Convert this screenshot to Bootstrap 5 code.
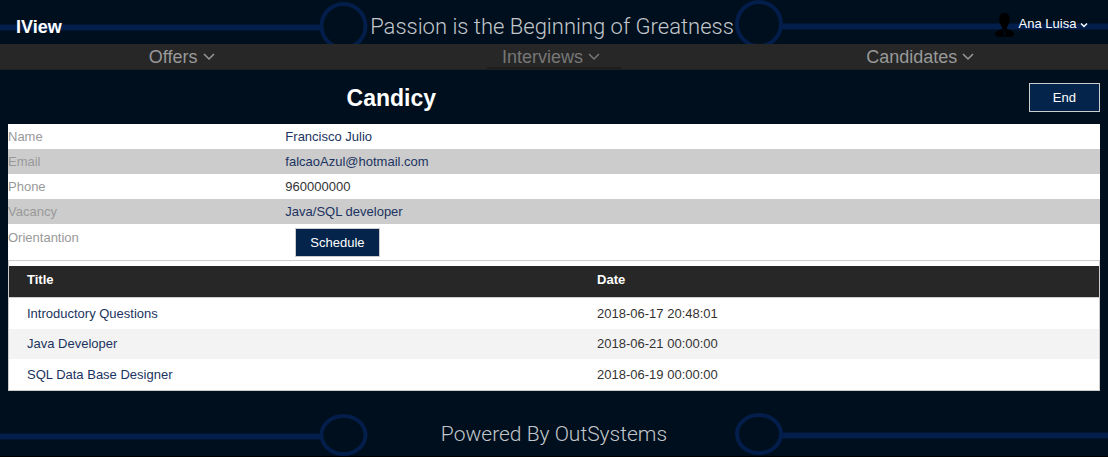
<!DOCTYPE html>
<html lang="en">
<head>
<meta charset="utf-8">
<meta name="viewport" content="width=device-width, initial-scale=1">
<title>IView</title>
<link rel="stylesheet" href="https://cdn.jsdelivr.net/npm/bootstrap@5.3.0/dist/css/bootstrap.min.css">
<style>
body { background: #000f1e; color: #333; font-family: "Liberation Sans", Arial, sans-serif; font-size: 13px; line-height: 20px; }
a { text-decoration: none; }
.banner { position: relative; overflow: hidden; }
.circuit { position: absolute; inset: 0; width: 100%; height: 100%; }
.circuit line, .circuit ellipse { stroke: #031e4a; fill: none; }
.circuit line { stroke-width: 6px; }
.circuit ellipse { stroke-width: 4px; fill: #000f1e; }
.banner-row { position: relative; min-height: 44px; padding: 0 16px; }
.slogan { font-family: Roboto, sans-serif; font-weight: 300; font-size: 22px; line-height: 28px; color: #c3c7cb; padding-top: 13px; white-space: nowrap; }
.brand { font-size: 18px; line-height: 24px; font-weight: bold; color: #fff; padding-top: 15px; }
.user { color: #fff; padding: 12px 4px 0 0; line-height: 24px; }
.user a { color: #fff; }
.menu-bar { background: #272727; border-bottom: 1px solid #1e2226; }
.menu-link { color: #999; font-size: 18px; line-height: 27px; padding: 0 21px 0 15px; height: 25px; }
.menu-link.current { color: #777; border-bottom: 2px solid #1e1e1e; }
.page-body { padding: 13px 8px 0; }
.heading { font-size: 23px; line-height: 30px; font-weight: bold; color: #fff; padding-left: 31%; }
.action { --bs-btn-bg: #04244b; --bs-btn-hover-bg: #0a3568; --bs-btn-color: #fff; --bs-btn-hover-color: #fff; --bs-btn-border-color: #ccc; --bs-btn-border-radius: 0; --bs-btn-padding-y: 3px; --bs-btn-padding-x: 14px; --bs-btn-font-size: 13px; --bs-btn-line-height: 21px; }
.action-wide { --bs-btn-padding-x: 23px; }
.details { background: #fff; margin: 11px 0 0; }
.details th { width: 25.4%; font-weight: normal; color: #999; vertical-align: top; }
.details th, .details td { padding: 3px 0 2px; }
.details tr:nth-child(even) { background: #ccc; }
.details a, .sessions a { color: #1b3360; }
.details tr.plan td { padding: 4px 10px 3px; }
.details tr.plan th { padding-top: 4px; }
.sessions-box { background: #fff; border: 1px solid #ccc; padding-top: 5px; }
.sessions th, .sessions td { padding: 5px 18px; }
.sessions thead { background: #272727; color: #fff; border-bottom: 1px solid #ccc; }
.sessions th { width: 52.3%; padding: 4px 18px 7px; }
.sessions tbody tr:nth-child(even) { background: #f3f3f3; }
.sessions tbody tr:nth-child(odd) td { padding-top: 6px; }
.foot { margin-top: 21px; border-bottom: 1px solid #000; }
.foot-text { position: relative; font-family: Roboto, sans-serif; font-weight: 300; font-size: 21px; line-height: 28px; color: #c3c7cb; padding: 8px 0; }
</style>
</head>
<body>
<header class="banner">
  <svg class="circuit" aria-hidden="true">
    <line x1="0" y1="27.5" x2="31%" y2="27.5"/><ellipse cx="31%" cy="26" rx="22" ry="22"/>
    <line x1="68.5%" y1="26.5" x2="100%" y2="26.5"/><ellipse cx="68.5%" cy="24" rx="22" ry="22"/>
  </svg>
  <div class="banner-row d-flex">
    <div class="col"><a class="brand d-inline-block" href="#">IView</a></div>
    <div class="slogan">Passion is the Beginning of Greatness</div>
    <div class="col user d-flex justify-content-end align-items-start">
      <svg width="21" height="26" viewBox="0 0 21 26" aria-hidden="true"><path d="M10.500 1C7 1 5 3.500 5.200 7.500C5.400 11 6.800 13.500 8 15v2L3 19Q.8 20 .8 22.500Q1 24.500 5 24.700H16Q20 24.500 20.200 22.500Q20.200 20 18 19l-5-2v-2C14.200 13.500 15.600 11 15.800 7.500C16 3.500 14 1 10.500 1Z"/><path d="M8.500 17.500l2 2-1 4M12.500 17.500l-2 2 1 4" fill="none" stroke="#020e22"/></svg>
      <a href="#" class="ms-1">Ana Luisa <svg width="8" height="6" viewBox="0 0 8 6" aria-hidden="true"><path d="M1 1.500l3 3 3-3" fill="none" stroke="#fff" stroke-width="1.500"/></svg></a>
    </div>
  </div>
</header>
<nav class="menu-bar row g-0 text-center">
  <div class="col-4 d-flex justify-content-center"><a class="menu-link" href="#">Offers <svg width="12" height="12" viewBox="0 0 12 12" aria-hidden="true"><path d="M1 2l5 5 5-5" fill="none" stroke="currentColor" stroke-width="1.500"/></svg></a></div>
  <div class="col-4 d-flex justify-content-center"><a class="menu-link current" href="#" aria-current="page">Interviews <svg width="12" height="12" viewBox="0 0 12 12" aria-hidden="true"><path d="M1 2l5 5 5-5" fill="none" stroke="currentColor" stroke-width="1.500"/></svg></a></div>
  <div class="col-4 d-flex justify-content-center"><a class="menu-link" href="#">Candidates <svg width="12" height="12" viewBox="0 0 12 12" aria-hidden="true"><path d="M1 2l5 5 5-5" fill="none" stroke="currentColor" stroke-width="1.500"/></svg></a></div>
</nav>
<main class="page-body">
  <div class="d-flex justify-content-between align-items-start">
    <h1 class="heading flex-grow-1 mb-0">Candicy</h1>
    <button type="button" class="btn action action-wide">End</button>
  </div>
  <table class="details w-100">
    <tbody>
      <tr><th scope="row">Name</th><td><a href="#">Francisco Julio</a></td></tr>
      <tr><th scope="row">Email</th><td><a href="#">falcaoAzul@hotmail.com</a></td></tr>
      <tr><th scope="row">Phone</th><td>960000000</td></tr>
      <tr><th scope="row">Vacancy</th><td><a href="#">Java/SQL developer</a></td></tr>
      <tr class="plan"><th scope="row">Orientantion</th><td><button type="button" class="btn action">Schedule</button></td></tr>
    </tbody>
  </table>
  <div class="sessions-box">
    <table class="sessions w-100">
      <thead><tr><th scope="col">Title</th><th scope="col">Date</th></tr></thead>
      <tbody>
        <tr><td><a href="#">Introductory Questions</a></td><td>2018-06-17 20:48:01</td></tr>
        <tr><td><a href="#">Java Developer</a></td><td>2018-06-21 00:00:00</td></tr>
        <tr><td><a href="#">SQL Data Base Designer</a></td><td>2018-06-19 00:00:00</td></tr>
      </tbody>
    </table>
  </div>
</main>
<footer class="banner foot text-center">
  <svg class="circuit" aria-hidden="true">
    <line x1="0" y1="24.500" x2="31%" y2="24.500"/><ellipse cx="31%" cy="23" rx="22" ry="19"/>
    <line x1="68.5%" y1="23.500" x2="100%" y2="23.500"/><ellipse cx="68.5%" cy="22" rx="22" ry="19"/>
  </svg>
  <div class="foot-text">Powered By OutSystems</div>
</footer>
<script src="https://cdn.jsdelivr.net/npm/bootstrap@5.3.0/dist/js/bootstrap.bundle.min.js"></script>
</body>
</html>
